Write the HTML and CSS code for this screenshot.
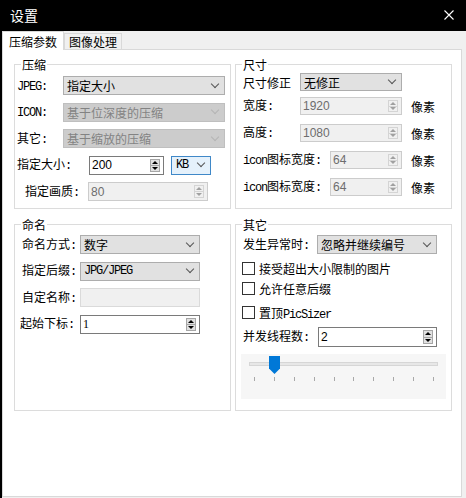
FILE: index.html
```html
<!DOCTYPE html>
<html lang="zh-CN">
<head>
<meta charset="utf-8">
<title>设置</title>
<link rel="stylesheet" href="styles.css">
</head>
<body>
<div class="window">
  <div class="titlebar">
    <span class="title">设置</span>
    <svg class="close" width="10" height="10" viewBox="0 0 10 10"><path d="M0.5 0.5L9.5 9.5M9.5 0.5L0.5 9.5" stroke="#fff" stroke-width="1.1" fill="none"/></svg>
  </div>
  <div class="client">
    <div class="tabs">
      <div class="tab active">压缩参数</div>
      <div class="tab">图像处理</div>
    </div>
    <div class="panel">
      <fieldset class="group">
        <legend>压缩</legend>
        <div class="form form-compress">
          <div class="row">
            <span class="label w46"><span class="sl">JPEG:</span></span>
            <div class="combo w162"><span>指定大小</span></div>
          </div>
          <div class="row">
            <span class="label w46"><span class="sl">ICON:</span></span>
            <div class="combo w162 disabled"><span>基于位深度的压缩</span></div>
          </div>
          <div class="row">
            <span class="label w46">其它<span class="sl">:</span></span>
            <div class="combo w162 disabled"><span>基于缩放的压缩</span></div>
          </div>
          <div class="row">
            <span class="label w72">指定大小<span class="sl">:</span></span>
            <div class="spin w75"><span class="val">200</span><span class="btns"><i class="up"></i><i class="dn"></i></span></div>
            <div class="combo w40 hover"><span class="sl">KB</span></div>
          </div>
          <div class="row">
            <span class="label w71 indent">指定画质<span class="sl">:</span></span>
            <div class="spin w120 disabled"><span class="val">80</span><span class="btns"><i class="up"></i><i class="dn"></i></span></div>
          </div>
        </div>
      </fieldset>

      <fieldset class="group">
        <legend>尺寸</legend>
        <div class="form form-size">
          <div class="row first">
            <span class="label w57">尺寸修正</span>
            <div class="combo w102"><span>无修正</span></div>
          </div>
          <div class="row">
            <span class="label w57">宽度<span class="sl">:</span></span>
            <div class="spin w102 disabled"><span class="val">1920</span><span class="btns"><i class="up"></i><i class="dn"></i></span></div>
            <span class="unit">像素</span>
          </div>
          <div class="row">
            <span class="label w57">高度<span class="sl">:</span></span>
            <div class="spin w102 disabled"><span class="val">1080</span><span class="btns"><i class="up"></i><i class="dn"></i></span></div>
            <span class="unit">像素</span>
          </div>
          <div class="row">
            <span class="label w87"><span class="sl">icon</span>图标宽度<span class="sl">:</span></span>
            <div class="spin w72 disabled"><span class="val">64</span><span class="btns"><i class="up"></i><i class="dn"></i></span></div>
            <span class="unit">像素</span>
          </div>
          <div class="row">
            <span class="label w87"><span class="sl">icon</span>图标宽度<span class="sl">:</span></span>
            <div class="spin w72 disabled"><span class="val">64</span><span class="btns"><i class="up"></i><i class="dn"></i></span></div>
            <span class="unit">像素</span>
          </div>
        </div>
      </fieldset>

      <fieldset class="group">
        <legend>命名</legend>
        <div class="form form-name">
          <div class="row">
            <span class="label w58">命名方式<span class="sl">:</span></span>
            <div class="combo w120"><span>数字</span></div>
          </div>
          <div class="row">
            <span class="label w58">指定后缀<span class="sl">:</span></span>
            <div class="combo w120"><span class="sl">JPG/JPEG</span></div>
          </div>
          <div class="row">
            <span class="label w58">自定名称<span class="sl">:</span></span>
            <div class="edit w120 disabled"></div>
          </div>
          <div class="row">
            <span class="label w58 back">起始下标<span class="sl">:</span></span>
            <div class="spin w120"><span class="val serif">1</span><span class="btns"><i class="up"></i><i class="dn"></i></span></div>
          </div>
        </div>
      </fieldset>

      <fieldset class="group">
        <legend>其它</legend>
        <div class="form form-other">
          <div class="row r-combo">
            <span class="label w74">发生异常时<span class="sl">:</span></span>
            <div class="combo w120"><span>忽略并继续编号</span></div>
          </div>
          <label class="check c1"><span class="box"></span><span>接受超出大小限制的图片</span></label>
          <label class="check c2"><span class="box"></span><span>允许任意后缀</span></label>
          <label class="check c3"><span class="box"></span><span>置顶<span class="sl">PicSizer</span></span></label>
          <div class="row r-spin">
            <span class="label w75">并发线程数<span class="sl">:</span></span>
            <div class="spin w119"><span class="val">2</span><span class="btns"><i class="up"></i><i class="dn"></i></span></div>
          </div>
          <div class="slider">
            <div class="groove"></div>
            <div class="ticks"><i></i><i></i><i></i><i></i><i></i><i></i><i></i><i></i><i></i><i></i></div>
            <svg class="handle" width="11" height="18" viewBox="0 0 11 18"><path d="M0 0H11V12.5L5.5 18L0 12.5Z" fill="#0078d7"/></svg>
          </div>
        </div>
      </fieldset>
    </div>
  </div>
</div>
</body>
</html>
```

FILE: styles.css
```css
* { box-sizing: border-box; }
html, body { margin: 0; padding: 0; }
body {
  width: 466px;
  height: 498px;
  overflow: hidden;
  font-family: "Noto Sans CJK SC", "Microsoft YaHei", sans-serif;
  font-size: 12px;
  color: #000;
  background: #f0f0f0;
}
.window {
  width: 466px;
  height: 498px;
  display: flex;
  flex-direction: column;
  background: #f0f0f0;
}
.titlebar {
  height: 31px;
  flex-shrink: 0;
  background: #000;
  color: #fff;
  display: flex;
  align-items: center;
  justify-content: space-between;
  padding: 0 12px 2px 10px;
}
.title { font-size: 14px; line-height: 20px; }
.close { display: block; }

.client {
  flex: 1;
  display: flex;
  flex-direction: column;
  border-left: 2px solid #000;
  padding: 0 4px 1px 0;
}
.tabs {
  display: flex;
  align-items: flex-end;
  height: 18px;
  flex-shrink: 0;
}
.tab {
  height: 16px;
  padding: 0 4px;
  border: 1px solid #d9d9d9;
  border-bottom: 0;
  background: #f0f0f0;
  line-height: 15px;
  white-space: nowrap;
}
.tab.active {
  height: 19px;
  margin-bottom: -1px;
  padding: 0 6px;
  background: #fff;
  line-height: 19px;
  position: relative;
  z-index: 1;
}
.panel {
  flex: 1;
  background: #fff;
  border: 1px solid #d9d9d9;
  padding: 6px 9px 0 11px;
  display: grid;
  grid-template-columns: 217px 217px;
  grid-template-rows: 153px 195px;
  column-gap: 4px;
  row-gap: 7px;
  align-content: start;
}
.group {
  margin: 0;
  padding: 0;
  border: 1px solid #dcdcdc;
  min-width: 0;
}
.group legend {
  margin-left: 6px;
  padding: 0 1px;
  font-size: 12px;
  line-height: 17px;
}
.form { display: flex; flex-direction: column; }
.form-compress { padding: 3px 5px 0 2px; gap: 7.5px; }
.form-size { padding: 0 5px 0 7px; gap: 9px; }
.form-size .row { height: 18px; }
.form-size .row.first { margin-bottom: -3px; }
.form-name { padding: 2px 5px 0 7px; gap: 7.5px; }
.form-other { padding: 2px 5px 0 5px; }

.row {
  display: flex;
  align-items: center;
  height: 19px;
  white-space: nowrap;
}
.label { flex-shrink: 0; line-height: 17px; }
.label.indent { padding-left: 8px; }
.label.back { margin-left: -2px; width: 60px; }
.w46 { width: 46px; }
.w57 { width: 57px; }
.w58 { width: 58px; }
.w71 { width: 71px; }
.w72 { width: 72px; }
.w74 { width: 74px; }
.w75 { width: 75px; }
.w87 { width: 87px; }

.sl {
  font-family: "Liberation Mono", monospace;
  font-size: 12px;
  letter-spacing: -1.2px;
}

.combo {
  height: 100%;
  display: flex;
  align-items: center;
  justify-content: space-between;
  border: 1px solid #adadad;
  background: #e1e1e1;
  padding: 0 6px 0 3px;
  line-height: 17px;
  flex-shrink: 0;
}
.combo::after {
  content: "";
  width: 5px;
  height: 5px;
  border-right: 1px solid #555;
  border-bottom: 1px solid #555;
  transform: rotate(45deg);
  margin-top: -4px;
}
.combo.disabled {
  background: #cccccc;
  border-color: #bfbfbf;
  color: #838383;
}
.combo.disabled::after { border-color: #b4b4b4; }
.combo.hover {
  background: #e5f1fb;
  border-color: #3f88c8;
  margin-left: 7px;
  padding-left: 4px;
}

.w40 { width: 40px; }
.w72.spin { width: 72px; }
.w75.spin { width: 75px; }
.w102 { width: 102px; }
.w119 { width: 119px; }
.w120 { width: 120px; }
.w162 { width: 162px; }

.spin {
  height: 100%;
  display: flex;
  align-items: stretch;
  border: 1px solid #7a7a7a;
  background: #fff;
  flex-shrink: 0;
}
.spin .val {
  flex: 1;
  padding-left: 2px;
  font-family: "Liberation Sans", Arial, sans-serif;
  font-size: 12px;
  display: flex;
  align-items: center;
}
.spin .val.serif { font-family: "Liberation Serif", serif; }
.btns {
  width: 10px;
  margin: 2px 3px 2px 0;
  display: flex;
  flex-direction: column;
  border: 1px solid #a6a6a6;
  background: #e1e1e1;
}
.btns i {
  flex: 1;
  display: flex;
  align-items: center;
  justify-content: center;
}
.btns i + i { border-top: 1px solid #a6a6a6; }
.btns i::before {
  content: "";
  border-left: 3px solid transparent;
  border-right: 3px solid transparent;
}
.btns .up::before { border-bottom: 3px solid #000; }
.btns .dn::before { border-top: 3px solid #000; }
.spin.disabled {
  background: #f0f0f0;
  border-color: #cccccc;
}
.spin.disabled .val { color: #6d6d6d; }
.spin.disabled .btns { border-color: #d4d4d4; background: #f0f0f0; }
.spin.disabled .btns i + i { border-top-color: #d4d4d4; }
.spin.disabled .btns .up::before { border-bottom-color: #a0a0a0; }
.spin.disabled .btns .dn::before { border-top-color: #a0a0a0; }

.edit {
  height: 100%;
  border: 1px solid #dadada;
  background: #f0f0f0;
}
.unit { margin-left: 9px; }

.check {
  display: flex;
  align-items: center;
  height: 13px;
  padding-left: 1px;
  white-space: nowrap;
}
.check .box {
  width: 13px;
  height: 13px;
  border: 1px solid #333;
  background: #fff;
  margin-right: 4px;
  flex-shrink: 0;
}
.check.c1 { margin-top: 8px; }
.check.c2 { margin-top: 7px; }
.check.c3 { margin-top: 11px; }
.form-other .r-combo { padding-left: 2px; }
.form-other .r-spin { padding-left: 2px; height: 20px; margin-top: 8px; }

.slider {
  position: relative;
  margin-top: 7px;
  width: 205px;
  height: 45px;
  background: #f6f6f6;
  padding-top: 8px;
}
.groove {
  height: 4px;
  margin: 0 8px;
  background: #e7e7e7;
  border: 1px solid #d6d6d6;
}
.ticks {
  display: flex;
  justify-content: space-between;
  margin-top: 11px;
  padding: 0 12px 0 13px;
}
.ticks i {
  width: 1px;
  height: 4px;
  background: #a8a8a8;
}
.handle {
  position: absolute;
  left: 28px;
  top: 2px;
}
```
